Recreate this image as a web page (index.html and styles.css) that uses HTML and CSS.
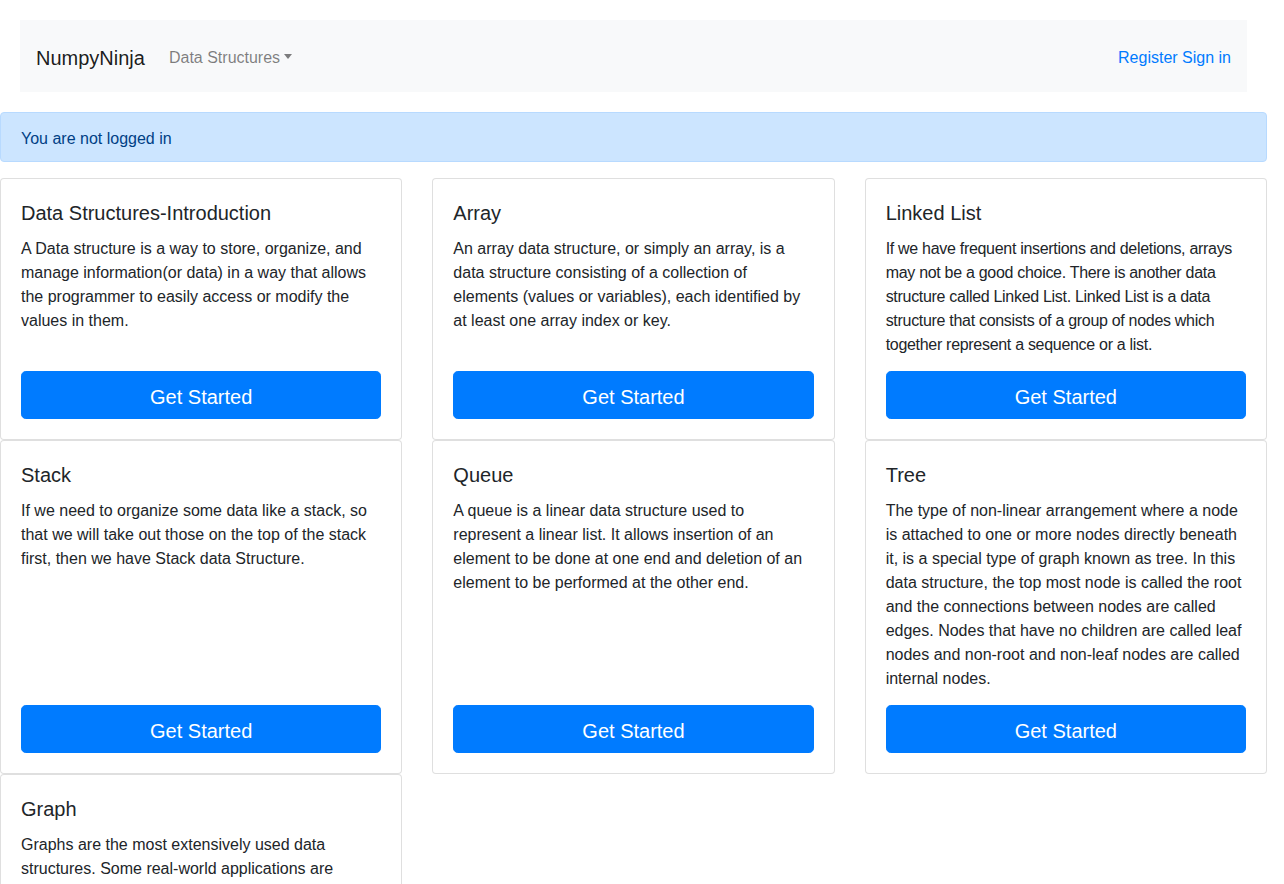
FILE: index.html
```html
<!DOCTYPE html>
<html lang="en">
<head>
<meta charset="utf-8">
<title>NumpyNinja</title>
<link rel="stylesheet" href="styles.css">
</head>
<body>
<div class="page">
  <nav class="navbar">
    <a class="brand" href="#">NumpyNinja</a>
    <a class="nav-link dropdown" href="#">Data Structures<span class="caret"></span></a>
    <div class="nav-right">
      <a href="#">Register</a> <a href="#">Sign in</a>
    </div>
  </nav>

  <div class="alert">You are not logged in</div>

  <div class="cards">
    <div class="card">
      <h5 class="card-title">Data Structures-Introduction</h5>
      <p class="card-text">A Data structure is a way to store, organize, and manage information(or data) in a way that allows the programmer to easily access or modify the values in them.</p>
      <a class="btn" href="#">Get Started</a>
    </div>
    <div class="card">
      <h5 class="card-title">Array</h5>
      <p class="card-text">An array data structure, or simply an array, is a data structure consisting of a collection of elements (values or variables), each identified by at least one array index or key.</p>
      <a class="btn" href="#">Get Started</a>
    </div>
    <div class="card">
      <h5 class="card-title">Linked List</h5>
      <p class="card-text tight">If we have frequent insertions and deletions, arrays<br>may not be a good choice. There is another data<br>structure called Linked List. Linked List is a data<br>structure that consists of a group of nodes which<br>together represent a sequence or a list.</p>
      <a class="btn" href="#">Get Started</a>
    </div>
    <div class="card">
      <h5 class="card-title">Stack</h5>
      <p class="card-text">If we need to organize some data like a stack, so that we will take out those on the top of the stack first, then we have Stack data Structure.</p>
      <a class="btn" href="#">Get Started</a>
    </div>
    <div class="card">
      <h5 class="card-title">Queue</h5>
      <p class="card-text">A queue is a linear data structure used to represent a linear list. It allows insertion of an element to be done at one end and deletion of an element to be performed at the other end.</p>
      <a class="btn" href="#">Get Started</a>
    </div>
    <div class="card">
      <h5 class="card-title">Tree</h5>
      <p class="card-text">The type of non-linear arrangement where a node is attached to one or more nodes directly beneath it, is a special type of graph known as tree. In this data structure, the top most node is called the root and the connections between nodes are called edges. Nodes that have no children are called leaf nodes and non-root and non-leaf nodes are called internal nodes.</p>
      <a class="btn" href="#">Get Started</a>
    </div>
    <div class="card">
      <h5 class="card-title">Graph</h5>
      <p class="card-text">Graphs are the most extensively used data structures. Some real-world applications are Google Maps, Hangouts, Facebook, Microsoft Excel, etc.</p>
      <a class="btn" href="#">Get Started</a>
    </div>
  </div>
</div>
</body>
</html>
```
FILE: styles.css
```css
* { box-sizing: border-box; }
html, body { margin: 0; padding: 0; background: #fff; }
body {
  font-family: "Liberation Sans", Arial, sans-serif;
  font-size: 16px;
  line-height: 1.5;
  color: #212529;
}
a { text-decoration: none; }
.page { width: 1267px; }

.navbar {
  margin: 20px;
  background: #f8f9fa;
  padding: 16px;
  display: flex;
  align-items: center;
}
.brand {
  font-size: 20px;
  line-height: 30px;
  padding: 7px 0 3px;
  margin-right: 16px;
  color: rgba(0,0,0,.9);
}
.nav-link {
  padding: 10px 8px 6px;
  color: rgba(0,0,0,.5);
  display: flex;
  align-items: center;
}
.caret {
  display: inline-block;
  margin-left: 4px;
  width: 0;
  height: 0;
  border-top: 5px solid rgba(0,0,0,.5);
  border-left: 4.5px solid transparent;
  border-right: 4.5px solid transparent;
  margin-top: -4px;
}
.nav-right {
  margin-left: auto;
  padding-top: 4px;
  color: #007bff;
}
.nav-right a { color: #007bff; }

.alert {
  background: #cce5ff;
  border: 1px solid #b8daff;
  color: #004085;
  border-radius: 4px;
  padding: 14px 20px 10px;
  margin-bottom: 16px;
}

.cards {
  display: grid;
  grid-template-columns: repeat(3, 1fr);
  column-gap: 30px;
}
.card {
  border: 1px solid rgba(0,0,0,.125);
  border-radius: 4px;
  padding: 20px;
  display: flex;
  flex-direction: column;
  background: #fff;
}
.card-title {
  margin: 0 0 10px 0;
  padding-top: 2px;
  font-size: 20px;
  font-weight: 400;
  line-height: 1.2;
}
.card-text {
  margin: 0 0 14px 0;
  padding-top: 2px;
}
.card-text.tight { letter-spacing: -0.3px; }
.btn {
  margin-top: auto;
  display: block;
  text-align: center;
  background: #007bff;
  border: 1px solid #007bff;
  color: #fff;
  font-size: 20px;
  line-height: 30px;
  padding: 10px 16px 6px;
  border-radius: 4.8px;
}
```
